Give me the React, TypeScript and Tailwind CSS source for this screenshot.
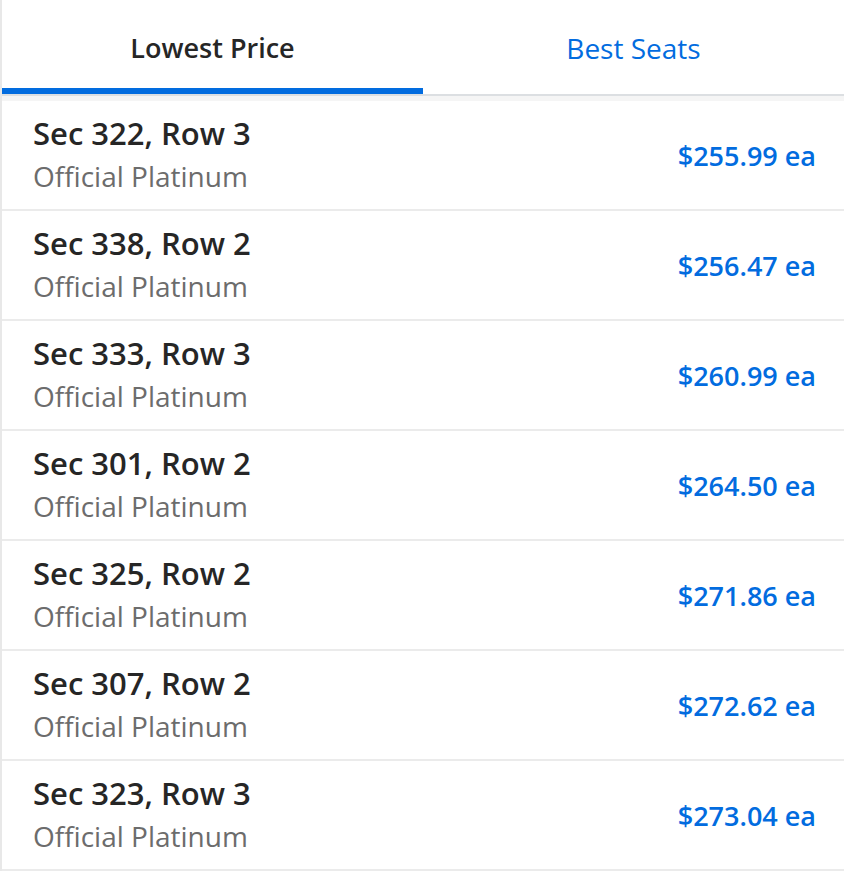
import { useState } from 'react';

const listings = [
  { sec: '322', row: '3', price: '$255.99' },
  { sec: '338', row: '2', price: '$256.47' },
  { sec: '333', row: '3', price: '$260.99' },
  { sec: '301', row: '2', price: '$264.50' },
  { sec: '325', row: '2', price: '$271.86' },
  { sec: '307', row: '2', price: '$272.62' },
  { sec: '323', row: '3', price: '$273.04' },
];

const App = () => {
  const [tab, setTab] = useState<'lowest' | 'best'>('lowest');

  return (
    <div className="min-h-screen bg-white font-['Open_Sans',sans-serif]">
      <div className="border-l-2 border-[#e8e8e8]">
        {/* Tabs */}
        <div className="flex h-[94px]">
          <button
            onClick={() => setTab('lowest')}
            className={`flex-1 flex items-center justify-center border-b-[6px] pt-[8px] text-[27px] leading-[36px] ${
              tab === 'lowest'
                ? 'border-[#026cdf] font-semibold text-[#262626]'
                : 'border-transparent text-[#026cdf]'
            }`}
          >
            Lowest Price
          </button>
          <button
            onClick={() => setTab('best')}
            className={`flex-1 flex items-center justify-center border-b-[6px] pt-[8px] text-[28px] leading-[36px] ${
              tab === 'best'
                ? 'border-[#026cdf] font-semibold text-[#262626]'
                : 'border-transparent text-[#026cdf]'
            }`}
          >
            Best Seats
          </button>
        </div>
        <div className="h-[2px] bg-[#dcdfe2]" />
        <div className="h-[5px] bg-[#f5f5f5]" />

        {/* Listings */}
        <ul>
          {listings.map((l) => (
            <li
              key={l.sec}
              className="flex h-[110px] items-center justify-between border-b-2 border-[#ebebeb] pl-[31px] pr-[28px]"
            >
              <div className="flex flex-col pb-[4px]">
                <span className="text-[31px] font-semibold leading-[36px] text-[#262626]">
                  Sec {l.sec}, Row {l.row}
                </span>
                <span className="mt-[9px] text-[28px] leading-[32px] text-[#6c6c6c]">
                  Official Platinum
                </span>
              </div>
              <span className="pt-[2px] text-[27px] font-semibold leading-[36px] text-[#026cdf]">
                {l.price} ea
              </span>
            </li>
          ))}
        </ul>
      </div>
    </div>
  );
};

export default App;
